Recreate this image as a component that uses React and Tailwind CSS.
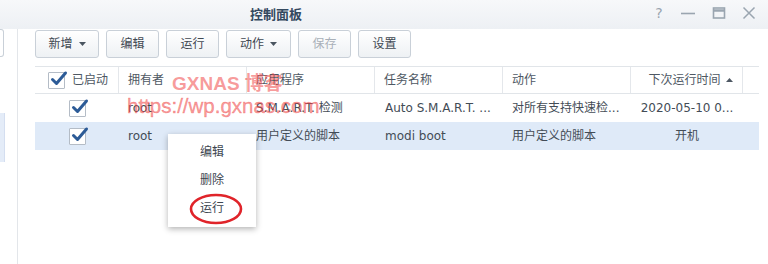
import React from "react";

const font = { fontFamily: '"DejaVu Sans", "Noto Sans CJK SC", sans-serif' };

function Check() {
  return (
    <span className="relative inline-block w-[17px] h-[17px] border border-[#b4bcc6] bg-white rounded-[1px]">
      <svg className="absolute left-[1px] top-[-3px]" width="18" height="18" viewBox="0 0 18 18">
        <path d="M2.5 9.5 L6.5 13.5 L15.5 3" fill="none" stroke="#2c5b97" strokeWidth="3" strokeLinecap="round" strokeLinejoin="round" />
      </svg>
    </span>
  );
}

function Btn({ children, arrow, disabled, w }) {
  return (
    <div
      className={`h-[28px] ${w} flex items-center justify-center gap-[6px] rounded-[3px] border border-[#c9d0d8] bg-gradient-to-b from-[#ffffff] to-[#eef1f4] text-[12px] ${disabled ? "text-[#a9b0b8]" : "text-[#3f4852]"}`}
    >
      <span>{children}</span>
      {arrow && (
        <svg width="7" height="4" viewBox="0 0 7 4">
          <path d="M0 0 L7 0 L3.5 4 Z" fill="#4a5560" />
        </svg>
      )}
    </div>
  );
}

export default function App() {
  const cols = [
    "w-[84px]",
    "w-[128px]",
    "w-[128px]",
    "w-[128px]",
    "w-[128px]",
    "w-[112px]",
  ];
  return (
    <div className="relative w-[768px] h-[264px] overflow-hidden bg-white text-[#4a5560]" style={font}>
      {/* title bar */}
      <div className="h-[29px] bg-gradient-to-b from-[#f7f8fa] to-[#edf0f4] flex items-center relative">
        <div className="pl-[250px] text-[13px] font-bold text-[#34495f]">控制面板</div>
        <div className="absolute right-[12px] top-[6px] flex items-center gap-[16px] text-[#9aa5b0]">
          <span className="text-[14px] w-[10px] text-center leading-none">?</span>
          <svg width="16" height="14" viewBox="0 0 16 14">
            <path d="M1 7.5 H15" stroke="#9aa5b0" strokeWidth="1.6" />
          </svg>
          <svg width="14" height="14" viewBox="0 0 14 14">
            <rect x="1.5" y="2" width="11" height="10" fill="none" stroke="#9aa5b0" strokeWidth="1.6" />
            <path d="M1.5 4.5 H12.5" stroke="#9aa5b0" strokeWidth="2.5" />
          </svg>
          <svg width="14" height="14" viewBox="0 0 14 14">
            <path d="M1.5 1.5 L12.5 12.5 M12.5 1.5 L1.5 12.5" stroke="#9aa5b0" strokeWidth="1.5" />
          </svg>
        </div>
      </div>

      <div className="flex h-[235px]">
        {/* sidebar */}
        <div className="w-[18px] border-r border-[#e3e6ea] flex flex-col">
          <div className="mt-[0px] h-[28px] w-[4px] border border-l-0 border-[#c9d0d8] rounded-r-[3px] bg-white" />
          <div className="mt-[56px] h-[49px] w-[5px] bg-[#e4ecf8] border-r border-[#d4def0]" />
        </div>

        {/* main */}
        <div className="flex-1 pl-[17px] pr-[8px]">
          <div className="flex gap-[7px] mt-[1px]">
            <Btn w="w-[64px]" arrow>新增</Btn>
            <Btn w="w-[53px]">编辑</Btn>
            <Btn w="w-[53px]">运行</Btn>
            <Btn w="w-[65px]" arrow>动作</Btn>
            <Btn w="w-[53px]" disabled>保存</Btn>
            <Btn w="w-[53px]">设置</Btn>
          </div>

          <div className="mt-[8px] w-[724px] text-[12px]">
            {/* header */}
            <div className="flex h-[28px] border-t border-b border-[#e1e5e9] text-[#4e5863]">
              <div className={`${cols[0]} flex items-center pl-[13px] gap-[7px] border-r border-[#e4e7eb]`}>
                <Check />
                <span>已启动</span>
              </div>
              <div className={`${cols[1]} flex items-center pl-[9px] border-r border-[#e4e7eb]`}>拥有者</div>
              <div className={`${cols[2]} flex items-center pl-[9px] border-r border-[#e4e7eb]`}>应用程序</div>
              <div className={`${cols[3]} flex items-center pl-[9px] border-r border-[#e4e7eb]`}>任务名称</div>
              <div className={`${cols[4]} flex items-center pl-[9px] border-r border-[#e4e7eb]`}>动作</div>
              <div className={`${cols[5]} flex items-center justify-center gap-[5px] pl-[8px] border-r border-[#e4e7eb]`}>
                <span>下次运行时间</span>
                <svg width="7" height="4" viewBox="0 0 7 4">
                  <path d="M0 4 L7 4 L3.5 0 Z" fill="#4e5863" />
                </svg>
              </div>
              <div className="flex-1" />
            </div>

            {/* row 1 */}
            <div className="flex h-[28px] items-center text-[#434c56]">
              <div className={`${cols[0]} flex justify-center`}><Check /></div>
              <div className={`${cols[1]} pl-[9px]`}>root</div>
              <div className={`${cols[2]} pl-[9px]`}>S.M.A.R.T. 检测</div>
              <div className={`${cols[3]} pl-[10px] whitespace-nowrap`}>Auto S.M.A.R.T. ...</div>
              <div className={`${cols[4]} pl-[9px] whitespace-nowrap`}>对所有支持快速检...</div>
              <div className={`${cols[5]} text-center whitespace-nowrap`}>2020-05-10 0...</div>
            </div>

            {/* row 2 selected */}
            <div className="flex h-[28px] items-center bg-[#dfeaf8] text-[#434c56]">
              <div className={`${cols[0]} flex justify-center`}><Check /></div>
              <div className={`${cols[1]} pl-[9px]`}>root</div>
              <div className={`${cols[2]} pl-[9px]`}>用户定义的脚本</div>
              <div className={`${cols[3]} pl-[10px]`}>modi boot</div>
              <div className={`${cols[4]} pl-[9px]`}>用户定义的脚本</div>
              <div className={`${cols[5]} text-center`}>开机</div>
            </div>
          </div>
        </div>
      </div>

      {/* watermark */}
      <div
        className="absolute left-[172px] top-[72px] text-[19px] font-bold leading-[24px] text-[rgba(240,70,70,0.55)] whitespace-nowrap pointer-events-none"
        style={{ fontFamily: '"Liberation Sans", "Noto Sans CJK SC", sans-serif' }}
      >
        GXNAS 博客
      </div>
      <div
        className="absolute left-[127px] top-[94px] text-[20.5px] leading-[24px] text-[rgba(240,70,70,0.55)] whitespace-nowrap pointer-events-none"
        style={{ fontFamily: '"Liberation Sans", sans-serif', WebkitTextStroke: "0.4px rgba(240,70,70,0.55)" }}
      >
        https://wp.gxnas.com
      </div>

      {/* context menu */}
      <div className="absolute left-[168px] top-[134px] w-[88px] h-[93px] bg-white shadow-[0_2px_6px_rgba(0,0,0,0.3)] flex flex-col items-center pt-[4px] text-[12px] text-[#3d4650]">
        <div className="h-[28px] flex items-center">编辑</div>
        <div className="h-[28px] flex items-center">删除</div>
        <div className="h-[28px] flex items-center relative">
          运行
          <svg className="absolute left-[-11px] top-[-1px]" width="54" height="32" viewBox="0 0 54 32">
            <ellipse cx="27" cy="16" rx="25" ry="14" fill="none" stroke="#e0242a" strokeWidth="2.6" />
          </svg>
        </div>
      </div>
    </div>
  );
}
